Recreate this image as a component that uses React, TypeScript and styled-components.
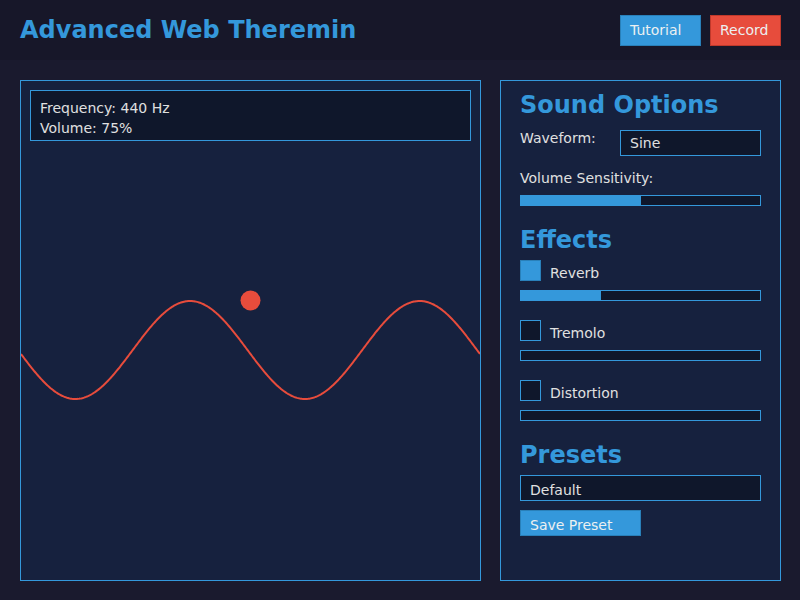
import React from "react";
import styled, { createGlobalStyle } from "styled-components";

const GlobalStyle = createGlobalStyle`
  html, body { margin: 0; padding: 0; background: #1a1a2e; }
  body {
    font-family: "DejaVu Sans", "Liberation Sans", sans-serif;
    color: #e0e0e0;
    overflow: hidden;
  }
  * { box-sizing: border-box; }
`;

const Page = styled.div`
  width: 800px;
  height: 600px;
  display: flex;
  flex-direction: column;
`;

const Header = styled.header`
  height: 60px;
  flex: none;
  display: flex;
  justify-content: space-between;
  align-items: flex-start;
  padding: 0 19px 0 20px;
  background: #171729;
`;

const Title = styled.h1`
  margin: 16px 0 0;
  font-size: 24px;
  line-height: 28px;
  font-weight: bold;
  color: #3498db;
`;

const HeaderActions = styled.div`
  display: flex;
  gap: 9px;
  margin-top: 15px;
`;

const HeaderButton = styled.button<{ $danger?: boolean; $width: number }>`
  width: ${(p) => p.$width}px;
  height: 31px;
  padding: 0 9px;
  border: 1px solid ${(p) => (p.$danger ? "#c0392b" : "#2980b9")};
  background: ${(p) => (p.$danger ? "#e74c3c" : "#3498db")};
  color: #ecf0f1;
  font-family: "DejaVu Sans", sans-serif;
  font-size: 14px;
  line-height: 29px;
  text-align: left;
  cursor: pointer;
`;

const Main = styled.main`
  flex: 1;
  display: flex;
  gap: 19px;
  padding: 20px 19px 19px 20px;
  min-height: 0;
`;

const Visualizer = styled.section`
  flex: 1;
  position: relative;
  background: #16213e;
  border: 1px solid #3498db;
  overflow: hidden;
`;

const WaveSvg = styled.svg`
  display: block;
  width: 100%;
  height: 100%;
`;

const InfoBox = styled.div`
  position: absolute;
  top: 9px;
  left: 9px;
  right: 9px;
  background: #0f172b;
  border: 1px solid #3498db;
  padding: 7px 9px 2px;
  font-size: 14px;
  line-height: 20px;
  color: #e0e0e0;
`;

const Controls = styled.aside`
  width: 281px;
  flex: none;
  background: #16213e;
  border: 1px solid #3498db;
  padding: 10px 19px;
`;

const Section = styled.section`
  & + & {
    margin-top: 20px;
  }
`;

const SectionTitle = styled.h2`
  margin: 0 0 6px;
  font-size: 24px;
  line-height: 28px;
  font-weight: bold;
  color: #3498db;
`;

const FieldRow = styled.div`
  display: flex;
  align-items: flex-start;
  margin-top: 11px;
`;

const FieldLabel = styled.div<{ $block?: boolean }>`
  width: ${(p) => (p.$block ? "auto" : "100px")};
  font-size: 14px;
  line-height: ${(p) => (p.$block ? "17px" : "normal")};
  margin-top: ${(p) => (p.$block ? "14px" : "0")};
  color: #e0e0e0;
`;

const Dropdown = styled.div<{ $width?: number; $textTop: number }>`
  width: ${(p) => (p.$width ? `${p.$width}px` : "100%")};
  height: 26px;
  background: #0f172b;
  border: 1px solid #3498db;
  padding: ${(p) => p.$textTop}px 9px 0;
  font-size: 14px;
  line-height: ${(p) => 24 - p.$textTop}px;
  color: #e0e0e0;
`;

const Track = styled.div<{ $gap: number }>`
  height: 11px;
  margin-top: ${(p) => p.$gap}px;
  background: #0f172b;
  border: 1px solid #3498db;
`;

const Fill = styled.div`
  height: 100%;
  background: #3498db;
`;

const Effect = styled.div`
  & + & {
    margin-top: 19px;
  }
`;

const EffectRow = styled.div`
  display: flex;
  align-items: flex-start;
  height: 21px;
`;

const CheckBox = styled.div<{ $checked: boolean }>`
  width: 21px;
  height: 21px;
  flex: none;
  margin-right: 9px;
  background: ${(p) => (p.$checked ? "#3498db" : "#0f172b")};
  border: 1px solid ${(p) => (p.$checked ? "#2980b9" : "#3498db")};
`;

const EffectName = styled.span`
  padding-top: 5px;
  font-size: 14px;
  line-height: 16px;
  color: #e0e0e0;
`;

const SaveButton = styled.button`
  display: block;
  width: 121px;
  height: 26px;
  margin-top: 9px;
  padding: 4px 9px 0;
  background: #3498db;
  border: 1px solid #2980b9;
  color: #ecf0f1;
  font-family: "DejaVu Sans", sans-serif;
  font-size: 14px;
  line-height: 20px;
  text-align: left;
  cursor: pointer;
`;

const W = 459;
const H = 499;

function buildWave(): string {
  const pts: string[] = [];
  for (let x = 0; x <= W; x += 1) {
    const y = 269 + 49 * Math.sin((2 * Math.PI * (x + 3)) / 229.5);
    pts.push(`${x === 0 ? "M" : "L"}${x} ${y.toFixed(2)}`);
  }
  return pts.join(" ");
}

const effects = [
  { name: "Reverb", on: true, level: 33.5 },
  { name: "Tremolo", on: false, level: 0 },
  { name: "Distortion", on: false, level: 0 },
];

export default function App() {
  const wave = buildWave();
  return (
    <>
      <GlobalStyle />
      <Page>
        <Header>
          <Title>Advanced Web Theremin</Title>
          <HeaderActions>
            <HeaderButton $width={81}>Tutorial</HeaderButton>
            <HeaderButton $width={71} $danger>
              Record
            </HeaderButton>
          </HeaderActions>
        </Header>
        <Main>
          <Visualizer>
            <WaveSvg viewBox={`0 0 ${W} ${H}`} preserveAspectRatio="none">
              <path d={wave} fill="none" stroke="#e74c3c" strokeWidth={2} />
              <circle cx={229.5} cy={219.5} r={10} fill="#e74c3c" />
            </WaveSvg>
            <InfoBox>
              <div>Frequency: 440 Hz</div>
              <div>Volume: 75%</div>
            </InfoBox>
          </Visualizer>
          <Controls>
            <Section>
              <SectionTitle>Sound Options</SectionTitle>
              <FieldRow>
                <FieldLabel>Waveform:</FieldLabel>
                <Dropdown $width={141} $textTop={0}>
                  Sine
                </Dropdown>
              </FieldRow>
              <FieldLabel $block>Volume Sensitivity:</FieldLabel>
              <Track $gap={8}>
                <Fill style={{ width: "50%" }} />
              </Track>
            </Section>
            <Section>
              <SectionTitle>Effects</SectionTitle>
              {effects.map((e) => (
                <Effect key={e.name}>
                  <EffectRow>
                    <CheckBox $checked={e.on} />
                    <EffectName>{e.name}</EffectName>
                  </EffectRow>
                  <Track $gap={9}>
                    <Fill style={{ width: `${e.level}%` }} />
                  </Track>
                </Effect>
              ))}
            </Section>
            <Section>
              <SectionTitle>Presets</SectionTitle>
              <Dropdown $textTop={4}>Default</Dropdown>
              <SaveButton>Save Preset</SaveButton>
            </Section>
          </Controls>
        </Main>
      </Page>
    </>
  );
}
